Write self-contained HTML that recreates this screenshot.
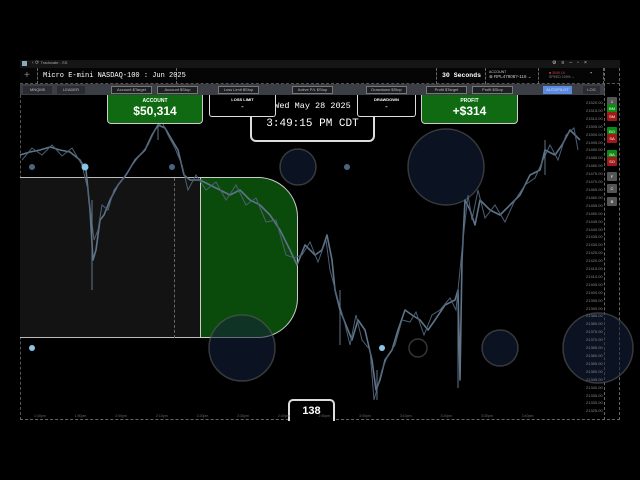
<!DOCTYPE html>
<html><head><meta charset="utf-8"><style>
*{margin:0;padding:0;box-sizing:border-box}
body{width:640px;height:480px;background:#000;position:relative;overflow:hidden;font-family:"Liberation Sans",sans-serif;color:#fff}
.a{position:absolute}
.mono{font-family:"Liberation Mono",monospace}
.tb{position:absolute;top:86px;height:8px;border:1px solid #777;background:#1e1f22;font-size:4px;color:#bbb;text-align:center;line-height:6px}
.pl{position:absolute;left:586px;font-size:4px;color:#888}
.bt{position:absolute;left:607px;width:10px;height:9px;font-size:4px;text-align:center;line-height:9px;border-radius:1px}
</style></head><body>
<div class="a" style="left:20px;top:60px;width:600px;height:8px;background:#151515"></div>
<div class="a" style="left:22px;top:61px;width:5px;height:5px;background:#8ab;"></div>
<div class="a" style="left:32px;top:60px;font-size:5px;color:#aaa">‹ ⟳ <span style="font-size:4px">Tradovate - SS</span></div>
<div class="a" style="left:552px;top:60px;font-size:5px;color:#ccc;letter-spacing:5px">⚙≡–▫×</div>
<div class="a" style="left:20px;top:68px;width:600px;height:16px;background:#050505;border-bottom:1px dashed #555"></div>
<div class="a" style="left:24px;top:70px;font-size:10px;color:#888">+</div>
<div class="a" style="left:37px;top:68px;width:140px;height:16px;border-left:1px dashed #666;border-right:1px dashed #666"></div>
<div class="a mono" style="left:43px;top:72px;font-size:7px">Micro E-mini NASDAQ-100 : Jun 2025</div>
<div class="a" style="left:436px;top:68px;width:50px;height:16px;border-left:1px dashed #666;border-right:1px dashed #666"></div>
<div class="a mono" style="left:442px;top:72px;font-size:6.5px;font-weight:bold">30 Seconds</div>
<div class="a" style="left:489px;top:70px;font-size:3.5px;color:#ccc">ACCOUNT<br><span style="font-size:4.5px">⊗ RPL47808?-116 ⌄</span></div>
<div class="a" style="left:538px;top:68px;width:66px;height:16px;border-left:1px dashed #666;border-right:1px dashed #666"></div>
<div class="a" style="left:549px;top:71px;font-size:3.5px;color:#c44">■ 3049.16<br><span style="color:#888">SPEED 100% ⌄</span></div>
<div class="a" style="left:590px;top:70px;font-size:7px">-</div>
<div class="a" style="left:20px;top:84px;width:585px;height:11px;background:#3b3e45"></div>
<div class="tb" style="left:23px;width:29px;background:#2a2c31;border-color:#2a2c31">MNQM5</div>
<div class="tb" style="left:57px;width:28px;background:#2a2c31;border-color:#2a2c31">LEADER</div>
<div class="tb" style="left:111px;width:41px">Account $Target</div>
<div class="tb" style="left:157px;width:41px">Account $Stop</div>
<div class="tb" style="left:218px;width:41px">Loss Limit $Stop</div>
<div class="tb" style="left:292px;width:41px">Active P/L $Stop</div>
<div class="tb" style="left:366px;width:41px">Drawdown $Stop</div>
<div class="tb" style="left:426px;width:41px">Profit $Target</div>
<div class="tb" style="left:472px;width:41px">Profit $Stop</div>
<div class="tb" style="left:543px;width:29px;background:#5a8be0;border-color:#5a8be0;color:#dde">AUTOPILOT</div>
<div class="tb" style="left:583px;width:17px;background:#2a2c31;border-color:#2a2c31">LOG</div>
<div class="a" style="left:20px;top:95px;width:1px;height:325px;border-left:1px dashed #555"></div>
<div class="a" style="left:20px;top:419px;width:600px;border-top:1px dashed #666"></div>
<div class="a" style="left:604px;top:68px;height:352px;border-left:1px dashed #666"></div>
<div class="a" style="left:619px;top:68px;height:352px;border-left:1px dashed #666"></div>
<div class="a" style="left:20px;top:177px;width:180px;height:161px;background:#131313;border-top:1px solid #bbb;border-bottom:1px solid #bbb"></div>
<div class="a" style="left:174px;top:178px;height:160px;border-left:1px dashed #666"></div>
<div class="a" style="left:200px;top:177px;width:98px;height:161px;background:#0a4a0a;border:1px solid #ccc;border-radius:0 40px 40px 0"></div>
<svg class="a" style="left:0;top:0" width="640" height="480">
<g fill="rgba(20,32,60,0.55)" stroke="rgba(90,90,90,0.6)" stroke-width="1.5">
<circle cx="298" cy="167" r="18"/><circle cx="446" cy="167" r="38"/>
<circle cx="242" cy="348" r="33"/>
<circle cx="500" cy="348" r="18"/><circle cx="598" cy="348" r="35"/>
<circle cx="418" cy="348" r="9" fill="none"/>
</g>
<polyline fill="none" stroke="#5f7488" stroke-width="1.6" stroke-linejoin="round" points="20,155 30,152 40,150 50,147 60,150 70,152 80,160 86,170 90,210 93,260 96,250 100,220 104,215 110,200 118,185 126,175 135,160 145,150 152,135 158,125 165,128 172,140 178,150 184,175 190,180 200,180 210,185 220,190 230,195 240,190 250,200 260,205 270,215 280,230 290,250 297,265 305,245 315,255 322,250 327,235 332,260 335,290 340,310 348,330 352,340 358,320 365,330 372,360 376,390 380,380 385,360 392,350 398,330 405,310 412,315 420,320 428,330 435,320 445,305 455,300 458,290 460,380 462,260 465,200 470,210 475,225 480,200 490,210 500,215 510,205 520,195 530,175 540,170 545,150 555,155 562,145 570,130 580,140"/>
<polyline fill="none" stroke="#4d6075" stroke-width="1" points="22,160 32,148 42,155 52,145 62,156 72,148 82,165 88,190 94,240 98,230 102,205 108,210 114,190 122,180 130,168 140,155 148,145 155,130 162,122 168,135 175,148 182,165 188,190 196,175 206,190 216,182 226,200 236,185 246,205 256,198 266,222 276,220 286,255 294,258 302,255 310,242 318,262 326,240 330,270 338,300 344,320 350,345 356,315 362,340 370,350 374,400 382,370 388,355 395,345 402,320 410,322 416,312 424,335 432,315 440,310 450,298 456,310 463,240 468,195 472,220 478,190 485,218 495,205 505,222 515,200 525,185 535,178 543,160 550,145 558,160 566,135 574,128 578,150"/>
<g stroke="#5f7488" stroke-width="1">
<line x1="92" y1="200" x2="92" y2="290"/><line x1="158" y1="118" x2="158" y2="140"/><line x1="377" y1="370" x2="377" y2="400"/><line x1="458" y1="300" x2="458" y2="388"/><line x1="340" y1="290" x2="340" y2="345"/><line x1="545" y1="140" x2="545" y2="175"/>
</g>
<g fill="#4a6580"><circle cx="32" cy="167" r="3"/><circle cx="172" cy="167" r="3"/><circle cx="347" cy="167" r="3"/></g>
<g fill="#8cc4e6"><circle cx="85" cy="167" r="3.5"/><circle cx="32" cy="348" r="3"/><circle cx="382" cy="348" r="3"/></g>
</svg>
<div class="a" style="left:107px;top:95px;width:96px;height:29px;background:#0f6a12;border:1px solid #ccc;border-top:none;border-radius:0 0 4px 4px;text-align:center">
<div style="font-size:5px;font-weight:bold;margin-top:3px">ACCOUNT</div><div style="font-size:12px;font-weight:bold">$50,314</div></div>
<div class="a" style="left:250px;top:95px;width:125px;height:47px;background:#000;border:2px solid #ddd;border-top:none;border-radius:0 0 6px 6px;text-align:center">
<div class="mono" style="font-size:8.5px;margin-top:6px">Wed May 28 2025</div><div class="mono" style="font-size:11px;margin-top:7px">3:49:15 PM CDT</div></div>
<div class="a" style="left:209px;top:95px;width:67px;height:22px;background:#000;border:1px solid #ddd;border-top:none;border-radius:0 0 3px 3px;text-align:center">
<div style="font-size:4px;font-weight:bold;margin-top:2px">LOSS LIMIT</div><div style="font-size:8px">-</div></div>
<div class="a" style="left:357px;top:95px;width:59px;height:22px;background:#000;border:1px solid #ddd;border-top:none;border-radius:0 0 3px 3px;text-align:center">
<div style="font-size:4px;font-weight:bold;margin-top:2px">DRAWDOWN</div><div style="font-size:8px">-</div></div>
<div class="a" style="left:421px;top:95px;width:97px;height:29px;background:#0f6a12;border:1px solid #ccc;border-top:none;border-radius:0 0 4px 4px;text-align:center">
<div style="font-size:5px;font-weight:bold;margin-top:3px">PROFIT</div><div style="font-size:12px;font-weight:bold">+$314</div></div>
<div class="a" style="left:288px;top:399px;width:47px;height:22px;background:#000;border:2px solid #ddd;border-bottom:none;border-radius:5px 5px 0 0;text-align:center;font-size:11px;font-weight:bold;line-height:20px">138</div>
<div class="a" style="left:34px;top:414px;font-size:3.5px;color:#666;word-spacing:28px;white-space:nowrap">1:40pm 1:50pm 2:00pm 2:10pm 2:20pm 2:30pm 2:40pm 2:50pm 3:00pm 3:10pm 3:20pm 3:30pm 3:40pm</div>
<div class="bt" style="top:97px;background:#555">1</div>
<div class="bt" style="top:104px;background:#0c8a14">BM</div>
<div class="bt" style="top:112px;background:#a01818">SM</div>
<div class="bt" style="top:127px;background:#0c8a14">BO</div>
<div class="bt" style="top:134px;background:#a01818">SA</div>
<div class="bt" style="top:150px;background:#0c8a14">BA</div>
<div class="bt" style="top:157px;background:#a01818">SO</div>
<div class="bt" style="top:172px;background:#555">F</div>
<div class="bt" style="top:184px;background:#555">C</div>
<div class="bt" style="top:197px;background:#555">B</div>
<div class="pl" style="top:99px;line-height:7.9px">21520.00<br>21515.00<br>21510.00<br>21505.00<br>21500.00<br>21495.00<br>21490.00<br>21485.00<br>21480.00<br>21475.00<br>21470.00<br>21465.00<br>21460.00<br>21455.00<br>21450.00<br>21445.00<br>21440.00<br>21435.00<br>21430.00<br>21425.00<br>21420.00<br>21415.00<br>21410.00<br>21405.00<br>21400.00<br>21395.00<br>21390.00<br>21385.00<br>21380.00<br>21375.00<br>21370.00<br>21365.00<br>21360.00<br>21355.00<br>21350.00<br>21345.00<br>21340.00<br>21335.00<br>21330.00<br>21325.00</div>
</body></html>
